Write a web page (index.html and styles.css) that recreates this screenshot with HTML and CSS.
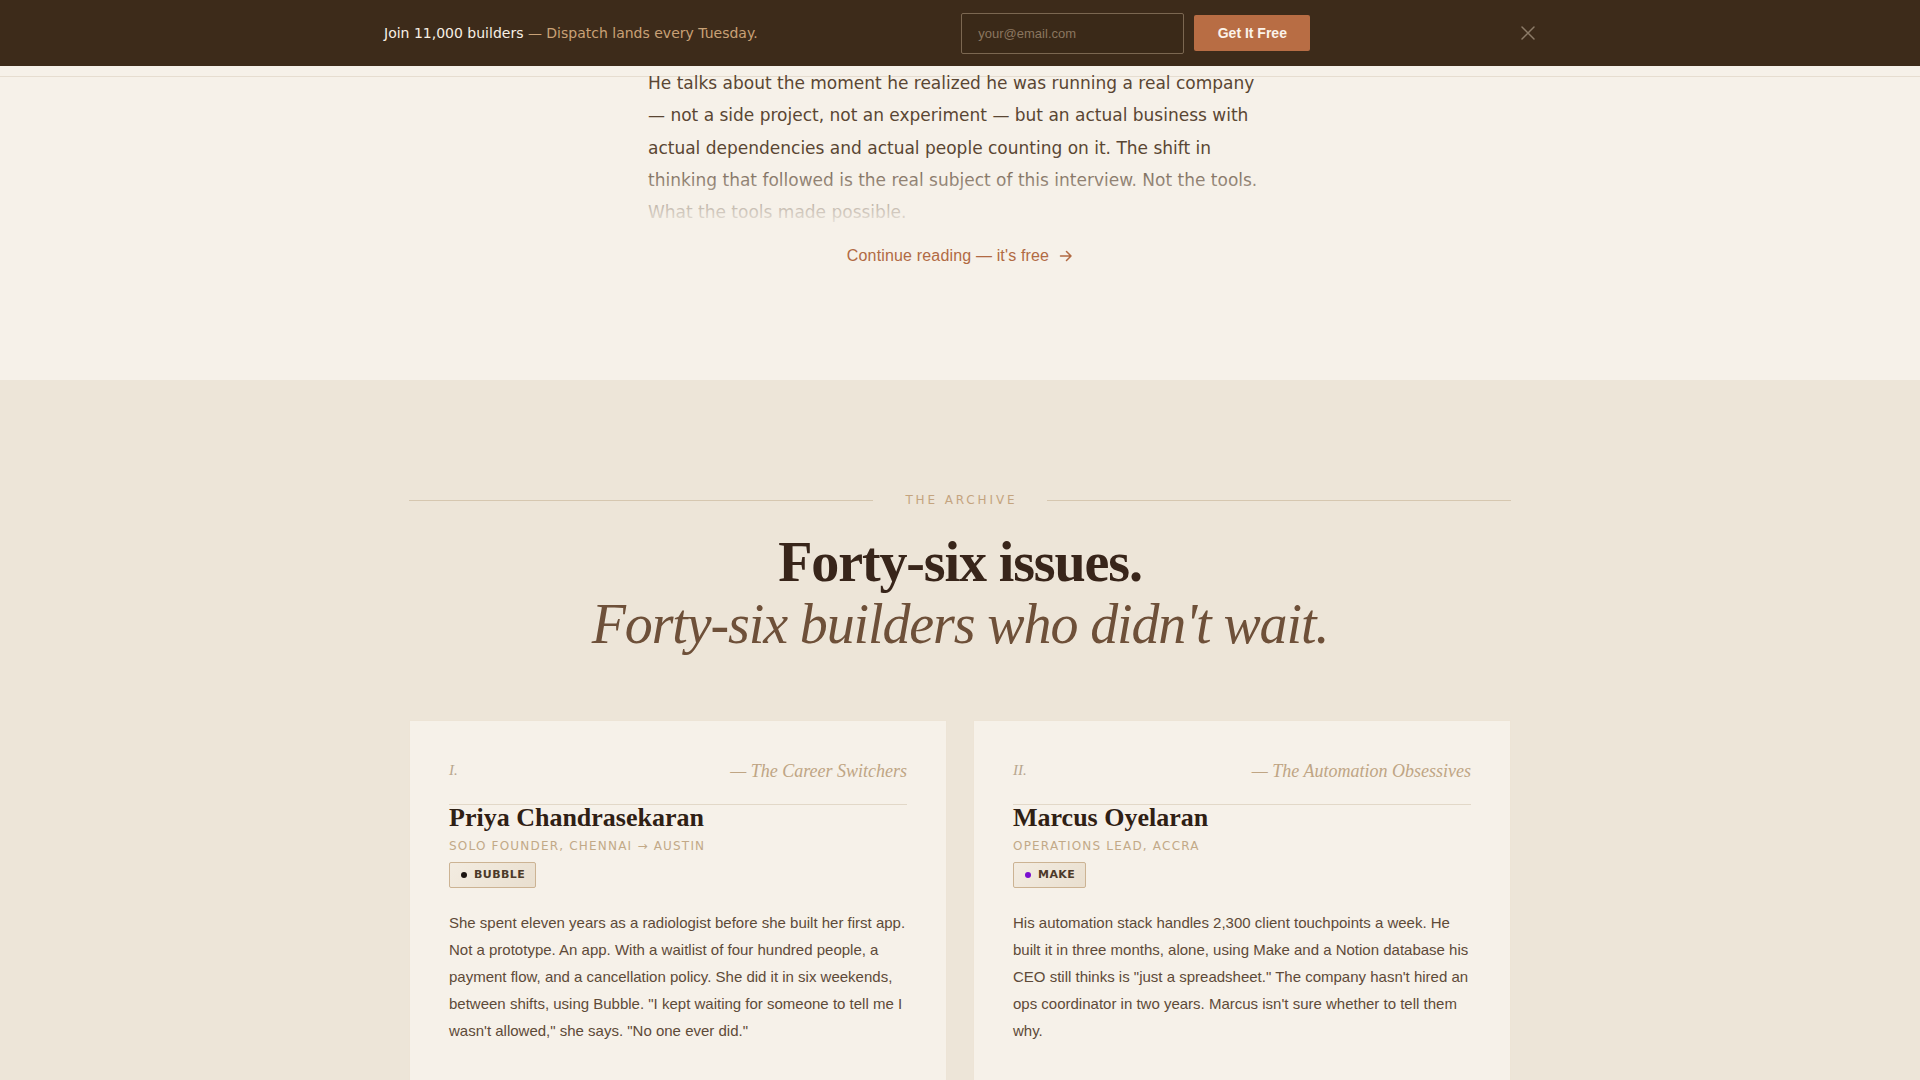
FILE: index.html
```html
<!DOCTYPE html>
<html lang="en">
<head>
<meta charset="utf-8">
<title>Dispatch — The Archive</title>
<link rel="stylesheet" href="styles.css">
</head>
<body>
  <div class="promo">
    <div class="promo-inner">
      <p class="promo-text"><span class="promo-strong">Join 11,000 builders</span> <span class="promo-muted">— Dispatch lands every Tuesday.</span></p>
      <form class="promo-form" onsubmit="return false">
        <input class="promo-input" type="email" placeholder="your@email.com">
        <button class="promo-btn" type="submit">Get It Free</button>
      </form>
      <button class="promo-close" type="button" aria-label="Close">
        <svg width="16" height="16" viewBox="0 0 16 16" fill="none" stroke="currentColor" stroke-width="1.5" stroke-linecap="round"><path d="M2 2 L14 14 M14 2 L2 14"/></svg>
      </button>
    </div>
  </div>
  <div class="header-rule"></div>

  <main>
    <section class="story">
      <div class="story-col">
        <p class="excerpt">He talks about the moment he realized he was running a real company — not a side project, not an experiment — but an actual business with actual dependencies and actual people counting on it. The shift in thinking that followed is the real subject of this interview. Not the tools. What the tools made possible.</p>
        <a class="continue" href="#">Continue reading — it's free
          <svg width="14" height="14" viewBox="0 0 14 14" fill="none" stroke="currentColor" stroke-width="1.5" stroke-linecap="round" stroke-linejoin="round"><path d="M1.5 7 H12 M7.5 2.5 L12 7 L7.5 11.5"/></svg>
        </a>
      </div>
    </section>

    <section class="archive">
      <div class="archive-wrap">
        <div class="eyebrow"><span class="eyebrow-line"></span><span class="eyebrow-text">THE ARCHIVE</span><span class="eyebrow-line"></span></div>
        <h2 class="archive-title"><span class="title-bold">Forty-six issues.</span><span class="title-italic">Forty-six builders who didn't wait.</span></h2>

        <div class="cards">
          <article class="card">
            <div class="card-head">
              <span class="card-num">I.</span>
              <span class="card-cat">— The Career Switchers</span>
            </div>
            <h3 class="card-name">Priya Chandrasekaran</h3>
            <div class="card-role">Solo founder, Chennai → Austin</div>
            <span class="tool"><span class="tool-dot dot-bubble"></span>BUBBLE</span>
            <p class="card-body">She spent eleven years as a radiologist before she built her first app. Not a prototype. An app. With a waitlist of four hundred people, a payment flow, and a cancellation policy. She did it in six weekends, between shifts, using Bubble. "I kept waiting for someone to tell me I wasn't allowed," she says. "No one ever did."</p>
            <a class="card-link" href="#">Read profile →</a>
          </article>

          <article class="card">
            <div class="card-head">
              <span class="card-num">II.</span>
              <span class="card-cat">— The Automation Obsessives</span>
            </div>
            <h3 class="card-name">Marcus Oyelaran</h3>
            <div class="card-role">Operations lead, Accra</div>
            <span class="tool"><span class="tool-dot dot-make"></span>MAKE</span>
            <p class="card-body">His automation stack handles 2,300 client touchpoints a week. He built it in three months, alone, using Make and a Notion database his CEO still thinks is "just a spreadsheet." The company hasn't hired an ops coordinator in two years. Marcus isn't sure whether to tell them why.</p>
            <a class="card-link" href="#">Read profile →</a>
          </article>
        </div>
      </div>
    </section>
  </main>
</body>
</html>
```
FILE: styles.css
```css
* { box-sizing: border-box; }

html, body {
  margin: 0;
  padding: 0;
}

body {
  background: #f6f1e9;
  color: #5a4633;
  font-family: "DejaVu Sans", sans-serif;
  overflow: hidden;
}

/* ---------- promo banner ---------- */
.promo {
  background: #3d2b1a;
  height: 66px;
}

.promo-inner {
  width: 1200px;
  height: 100%;
  margin: 0 auto;
  padding: 0 24px;
  display: flex;
  align-items: center;
  justify-content: space-between;
}

.promo-text {
  margin: 0;
  font-size: 14px;
  line-height: 20px;
}

.promo-strong { color: #f7efe4; }
.promo-muted { color: #c9a176; }

.promo-form {
  display: flex;
  gap: 10px;
  align-items: center;
  margin-right: 6px;
}

.promo-input {
  width: 223px;
  height: 41px;
  background: #3a2918;
  border: 1px solid #7b6751;
  border-radius: 2px;
  padding: 0 16px;
  color: #f0e6d8;
  font-family: "Liberation Sans", Arial, sans-serif;
  font-size: 13px;
  outline: none;
}

.promo-input::placeholder { color: #8a765f; }

.promo-btn {
  width: 116px;
  height: 36px;
  background: #b86d44;
  color: #fbf3ea;
  border: none;
  border-radius: 2px;
  font-family: "Liberation Sans", Arial, sans-serif;
  font-weight: 700;
  font-size: 14px;
  cursor: pointer;
}

.promo-close {
  background: none;
  border: none;
  padding: 0;
  color: #8c7b68;
  display: flex;
  cursor: pointer;
}

.header-rule {
  position: absolute;
  top: 76px;
  left: 0;
  right: 0;
  height: 1px;
  background: #e6ddd0;
}

/* ---------- story excerpt ---------- */
.story {
  padding-top: 1px;
  padding-bottom: 112px;
}

.story-col {
  width: 624px;
  margin: 0 auto;
  display: flex;
  flex-direction: column;
  align-items: center;
}

.excerpt {
  position: relative;
  margin: 0;
  font-size: 17px;
  line-height: 1.9;
  color: #5a4633;
}

.excerpt::after {
  content: "";
  position: absolute;
  left: 0;
  right: 0;
  bottom: 0;
  height: 74px;
  background: linear-gradient(to bottom, rgba(246, 241, 233, 0), rgba(246, 241, 233, 0.97));
}

.continue {
  margin-top: 16px;
  display: inline-flex;
  align-items: center;
  gap: 10px;
  font-family: "Liberation Sans", Arial, sans-serif;
  font-size: 16px;
  letter-spacing: 0.01em;
  line-height: 24px;
  color: #b16a43;
  text-decoration: none;
}

/* ---------- archive ---------- */
.archive {
  background: #ede5d8;
  padding-top: 111px;
  padding-bottom: 80px;
}

.archive-wrap {
  width: 1102px;
  margin: 0 auto;
}

.eyebrow {
  display: flex;
  align-items: center;
  gap: 32px;
}

.eyebrow-line {
  flex: 1;
  height: 1px;
  background: #d6c7b0;
}

.eyebrow-text {
  font-size: 12px;
  line-height: 18px;
  letter-spacing: 0.24em;
  margin-right: -0.24em;
  color: #c4a47f;
}

.archive-title {
  margin: 23px 0 0;
  font-family: "Liberation Serif", "Times New Roman", serif;
  font-size: 56px;
  line-height: 1.1;
  letter-spacing: -0.02em;
  text-align: center;
  font-weight: 400;
}

.title-bold {
  display: block;
  font-weight: 700;
  color: #38251a;
}

.title-italic {
  display: block;
  font-style: italic;
  color: #6e5039;
}

.cards {
  margin-top: 64px;
  display: grid;
  grid-template-columns: 1fr 1fr;
  gap: 26px;
}

.card {
  background: #f6f1e9;
  border: 1px solid #ede4d6;
  padding: 39px 39px 40px;
  display: flex;
  flex-direction: column;
  align-items: flex-start;
}

.card-head {
  align-self: stretch;
  display: flex;
  justify-content: space-between;
  align-items: center;
  padding-bottom: 21px;
  border-bottom: 1px solid #e2d8c8;
  font-family: "Liberation Serif", "Times New Roman", serif;
  font-style: italic;
  line-height: 1.3;
}

.card-num {
  font-size: 15px;
  color: #b8a68e;
  margin-top: -2px;
}

.card-cat {
  font-size: 18px;
  color: #bfa584;
}

.card-name {
  margin: -1px 0 0;
  font-family: "Liberation Serif", "Times New Roman", serif;
  font-weight: 700;
  font-size: 26px;
  line-height: 1.1;
  color: #2f2014;
}

.card-role {
  margin-top: 5px;
  font-size: 12px;
  line-height: 16px;
  letter-spacing: 0.1em;
  text-transform: uppercase;
  color: #c2a987;
}

.tool {
  margin-top: 8px;
  height: 26px;
  display: inline-flex;
  align-items: center;
  gap: 7px;
  padding: 0 10px 0 11px;
  border: 1px solid #ccb393;
  border-radius: 2px;
  background: linear-gradient(135deg, #f3ece1, #e9dfcf);
  font-size: 11px;
  font-weight: 700;
  letter-spacing: 0.04em;
  color: #4c3a29;
}

.tool-dot {
  width: 6px;
  height: 6px;
  border-radius: 50%;
}

.dot-bubble { background: #1c1512; }
.dot-make { background: #7a0fd0; }

.card-body {
  margin: 21px 0 0;
  font-family: "Liberation Sans", Arial, sans-serif;
  font-size: 15px;
  line-height: 1.8;
  color: #5e4a38;
}

.card-link {
  margin-top: 32px;
  font-family: "Liberation Sans", Arial, sans-serif;
  font-size: 14px;
  line-height: 20px;
  color: #b16a43;
  text-decoration: none;
}
```
